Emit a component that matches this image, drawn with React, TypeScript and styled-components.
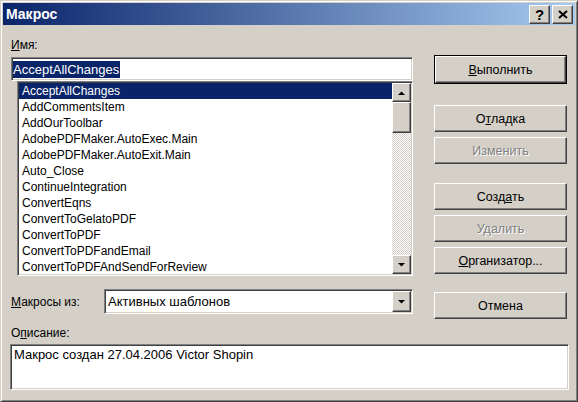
import React from "react";
import styled, { createGlobalStyle, css } from "styled-components";

const GlobalStyle = createGlobalStyle`
  html, body {
    margin: 0;
    padding: 0;
    background: #d4d0c8;
  }
  body {
    font-family: "Liberation Sans", Arial, sans-serif;
    font-size: 12px;
    color: #000;
  }
  * {
    box-sizing: border-box;
  }
`;

const raised = css`
  border: 1px solid;
  border-color: #fff #404040 #404040 #fff;
  box-shadow: inset -1px -1px #808080, inset 1px 1px #d4d0c8;
  background: #d4d0c8;
`;

const sunken = css`
  border: 1px solid;
  border-color: #808080 #fff #fff #808080;
  box-shadow: inset 1px 1px #404040, inset -1px -1px #d4d0c8;
  background: #fff;
`;

const Window = styled.div`
  width: 578px;
  height: 402px;
  display: flex;
  flex-direction: column;
  background: #d4d0c8;
  border: 1px solid;
  border-color: #d4d0c8 #404040 #404040 #d4d0c8;
  box-shadow: inset 1px 1px #fff, inset -1px -1px #808080;
  padding: 2px;
`;

const TitleBar = styled.div`
  flex: none;
  height: 22px;
  display: flex;
  align-items: center;
  padding: 0 2px 0 3px;
  background: linear-gradient(to right, #0a246a, #a6caf0);
  color: #fff;
  font-weight: bold;
  font-size: 14px;
`;

const TitleText = styled.span`
  flex: 1;
`;

const CaptionButton = styled.div`
  ${raised}
  width: 21px;
  height: 19px;
  margin-left: 2px;
  display: flex;
  align-items: center;
  justify-content: center;
  color: #000;
  font-size: 15px;
  font-weight: bold;
`;

const Body = styled.div`
  flex: 1;
  display: flex;
  flex-direction: column;
  padding: 0 8px 0 8px;
`;

const Main = styled.div`
  display: flex;
  gap: 21px;
`;

const LeftCol = styled.div`
  width: 402px;
  display: flex;
  flex-direction: column;
`;

const RightCol = styled.div`
  width: 133px;
  display: flex;
  flex-direction: column;
  padding-top: 30px;
`;

const Label = styled.div<{ $top?: number; $width?: number }>`
  height: 14px;
  line-height: 14px;
  font-size: 12px;
  margin-top: ${(p) => p.$top ?? 0}px;
  ${(p) => p.$width && `width: ${p.$width}px; flex: none;`}
`;

const Key = styled.span`
  text-decoration: underline;
`;

const NameField = styled.div`
  ${sunken}
  height: 24px;
  margin-top: 5px;
  padding: 0 1px;
  display: flex;
  align-items: center;
  font-size: 13px;
`;

const SelectedText = styled.span`
  background: #0a246a;
  color: #fff;
  line-height: 17px;
  padding-right: 1px;
`;

const ListBox = styled.div`
  ${sunken}
  margin-left: 6px;
  height: 195px;
  padding: 1px;
  display: flex;
`;

const Items = styled.div`
  flex: 1;
  overflow: hidden;
`;

const Item = styled.div<{ $selected?: boolean }>`
  height: 16px;
  line-height: 16px;
  padding-left: 3px;
  white-space: nowrap;
  font-size: 12px;
  ${(p) =>
    p.$selected &&
    css`
      background: #0a246a;
      color: #fff;
    `}
`;

const ScrollBar = styled.div`
  width: 19px;
  display: flex;
  flex-direction: column;
`;

const ScrollButton = styled.div<{ $height?: number }>`
  ${raised}
  flex: none;
  height: ${(p) => p.$height ?? 19}px;
  display: flex;
  align-items: center;
  justify-content: center;
`;

const Track = styled.div`
  flex: 1;
  background: repeating-conic-gradient(#d4d0c8 0 25%, #fff 0 50%) 0 0 / 2px 2px;
`;

const SourceRow = styled.div`
  display: flex;
  align-items: center;
  margin-top: 13px;
`;

const Select = styled.div`
  ${sunken}
  flex: 1;
  height: 25px;
  padding: 1px;
  display: flex;
  align-items: stretch;
  font-size: 13px;
`;

const SelectValue = styled.div`
  flex: 1;
  display: flex;
  align-items: center;
  padding-left: 2px;
`;

const SelectButton = styled(ScrollButton)`
  width: 19px;
  height: auto;
`;

const DefaultFrame = styled.div`
  border: 1px solid #000;
`;

const Button = styled.div<{ $top?: number; $disabled?: boolean }>`
  ${raised}
  height: 27px;
  margin-top: ${(p) => p.$top ?? 0}px;
  display: flex;
  align-items: center;
  justify-content: center;
  font-size: 12.5px;
  ${(p) =>
    p.$disabled &&
    css`
      color: #808080;
      text-shadow: 1px 1px #fff;
    `}
`;

const DescBox = styled.div`
  ${sunken}
  height: 46px;
  margin: 4px -2px 0 -1px;
  padding: 2px 3px;
  font-size: 13px;
  line-height: 16px;
`;

const ArrowUp = () => (
  <svg width="7" height="4" viewBox="0 0 7 4">
    <polygon points="0,4 7,4 3.5,0.5" fill="#000" />
  </svg>
);

const ArrowDown = () => (
  <svg width="7" height="4" viewBox="0 0 7 4">
    <polygon points="0,0 7,0 3.5,3.5" fill="#000" />
  </svg>
);

const CloseGlyph = () => (
  <svg width="10" height="9" viewBox="0 0 10 9">
    <path d="M1 1 L9 8 M9 1 L1 8" stroke="#000" strokeWidth="2" />
  </svg>
);

const macros = [
  "AcceptAllChanges",
  "AddCommentsItem",
  "AddOurToolbar",
  "AdobePDFMaker.AutoExec.Main",
  "AdobePDFMaker.AutoExit.Main",
  "Auto_Close",
  "ContinueIntegration",
  "ConvertEqns",
  "ConvertToGelatoPDF",
  "ConvertToPDF",
  "ConvertToPDFandEmail",
  "ConvertToPDFAndSendForReview",
];

export default function App() {
  return (
    <>
      <GlobalStyle />
      <Window>
        <TitleBar>
          <TitleText>Макрос</TitleText>
          <CaptionButton>?</CaptionButton>
          <CaptionButton>
            <CloseGlyph />
          </CaptionButton>
        </TitleBar>
        <Body>
          <Main>
            <LeftCol>
              <Label $top={13}>
                <Key>И</Key>мя:
              </Label>
              <NameField>
                <SelectedText>AcceptAllChanges</SelectedText>
              </NameField>
              <ListBox>
                <Items>
                  {macros.map((name, i) => (
                    <Item key={name} $selected={i === 0}>
                      {name}
                    </Item>
                  ))}
                </Items>
                <ScrollBar>
                  <ScrollButton>
                    <ArrowUp />
                  </ScrollButton>
                  <ScrollButton $height={31} />
                  <Track />
                  <ScrollButton>
                    <ArrowDown />
                  </ScrollButton>
                </ScrollBar>
              </ListBox>
              <SourceRow>
                <Label $width={93}>
                  <Key>М</Key>акросы из:
                </Label>
                <Select>
                  <SelectValue>Активных шаблонов</SelectValue>
                  <SelectButton>
                    <ArrowDown />
                  </SelectButton>
                </Select>
              </SourceRow>
            </LeftCol>
            <RightCol>
              <DefaultFrame>
                <Button>
                  <span>
                    <Key>В</Key>ыполнить
                  </span>
                </Button>
              </DefaultFrame>
              <Button $top={21}>
                <span>
                  О<Key>т</Key>ладка
                </span>
              </Button>
              <Button $top={5} $disabled>
                Изменить
              </Button>
              <Button $top={19}>
                <span>
                  Созд<Key>а</Key>ть
                </span>
              </Button>
              <Button $top={5} $disabled>
                Удалить
              </Button>
              <Button $top={5}>
                <span>
                  <Key>О</Key>рганизатор...
                </span>
              </Button>
              <Button $top={18}>Отмена</Button>
            </RightCol>
          </Main>
          <Label $top={7}>
            О<Key>п</Key>исание:
          </Label>
          <DescBox>Макрос создан 27.04.2006 Victor Shopin</DescBox>
        </Body>
      </Window>
    </>
  );
}
